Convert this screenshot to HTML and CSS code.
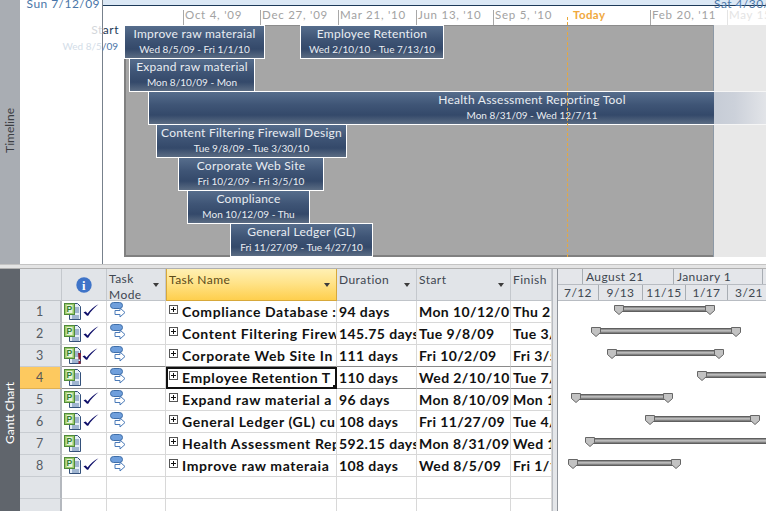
FILE: index.html
```html
<!DOCTYPE html>
<html lang="en">
<head>
<meta charset="utf-8">
<title>Project timeline and Gantt chart</title>
<link rel="stylesheet" href="styles.css">
</head>
<body>
<svg class="defs" width="0" height="0" aria-hidden="true">
  <symbol id="note" viewBox="0 0 17 17">
    <path d="M5.500.5h8l3 3v13h-11z" fill="#e6eef8" stroke="#33507a"/>
    <path d="M11 5h4M11 7h4M11 9h4M8 13h7M8 15h7" stroke="#5a7ca8"/>
    <rect x=".5" y=".5" width="10" height="11" fill="#9ccb6c" stroke="#4f8a3a"/>
    <rect x="2.500" y="2" width="6" height="8" fill="#e8f4d8"/>
    <text x="5.500" y="9" font-family="Liberation Sans" font-size="8.500" font-weight="700" text-anchor="middle" fill="#2f7d32">P</text>
  </symbol>
  <symbol id="check" viewBox="0 0 16 12">
    <path d="M.5 8.200 2.800 7.500 4.500 9.500C7.500 5.500 11 2.500 15.500.3 11.500 3.500 8 7 5.200 11.700L4 11.700z" fill="#10106a"/>
  </symbol>
  <symbol id="mode" viewBox="0 0 16 16">
    <path d="M5 8.500h5V6l5 4.500L10 15v-2.500H5z" fill="#fff" stroke="#4a7ab8"/>
    <rect x=".5" y=".5" width="12" height="6" rx="3" fill="#6f9fdc" stroke="#3f6ea8"/>
  </symbol>
  <symbol id="info" viewBox="0 0 16 16">
    <circle cx="8" cy="8" r="7.700" fill="#3f74c8"/>
    <text x="8" y="12.500" font-family="Liberation Serif" font-size="12.500" font-weight="700" text-anchor="middle" fill="#fff">i</text>
  </symbol>
  <symbol id="expand" viewBox="0 0 9 9">
    <rect x=".5" y=".5" width="8" height="8" fill="#fff" stroke="#555"/>
    <path d="M2 4.500h5M4.500 2v5" stroke="#111"/>
  </symbol>
  <symbol id="cap" viewBox="0 0 10 10">
    <path d="M.5.500h9v5l-4.500 4-4.500-4z" fill="#c2c2c2" stroke="#666"/>
  </symbol>
  <symbol id="warn" viewBox="0 0 3 11">
    <path d="M0 0h3L2.500 6.500H.5zM.5 8h2v3h-2z" fill="#8f1f2f"/>
  </symbol>
</svg>

<main class="app">
  <section class="timeline-pane">
    <div class="rail rail-light"><span class="rail-label">Timeline</span></div>
    <div class="timeline-gutter"></div>
    <div class="timeline-canvas">
      <div class="band"></div>
      <span class="edge-date edge-start">Sun 7/12/09</span>
      <span class="edge-date edge-end">Sat 4/30/</span>
      <span class="start-label"><span class="faded">St</span>art</span>
      <span class="start-date"><span class="faded-more">Wed 8/5</span>/09</span>

      <div class="tick" style="left:80px"><span>Oct 4, '09</span></div>
      <div class="tick" style="left:157px"><span>Dec 27, '09</span></div>
      <div class="tick" style="left:235px"><span>Mar 21, '10</span></div>
      <div class="tick" style="left:313px"><span>Jun 13, '10</span></div>
      <div class="tick" style="left:390px"><span>Sep 5, '10</span></div>
      <div class="tick" style="left:547px"><span>Feb 20, '11</span></div>
      <div class="tick tick-faded" style="left:624px"><span>May 15</span></div>

      <div class="plot"></div>
      <div class="future"></div>

      <div class="tl-bar" style="left:21px;top:25px;width:141px"><b>Improve raw materaial</b><i>Wed 8/5/09 - Fri 1/1/10</i></div>
      <div class="tl-bar" style="left:197px;top:25px;width:144px"><b>Employee Retention</b><i>Wed 2/10/10 - Tue 7/13/10</i></div>
      <div class="tl-bar" style="left:26px;top:58px;width:126px"><b>Expand raw material</b><i>Mon 8/10/09 - Mon</i></div>
      <div class="tl-bar" style="left:45px;top:91px;width:768px"><b>Health Assessment Reporting Tool</b><i>Mon 8/31/09 - Wed 12/7/11</i></div>
      <div class="tl-bar" style="left:53px;top:124px;width:191px"><b>Content Filtering Firewall Design</b><i>Tue 9/8/09 - Tue 3/30/10</i></div>
      <div class="tl-bar" style="left:75px;top:157px;width:146px"><b>Corporate Web Site</b><i>Fri 10/2/09 - Fri 3/5/10</i></div>
      <div class="tl-bar" style="left:84px;top:190px;width:123px"><b>Compliance</b><i>Mon 10/12/09 - Thu</i></div>
      <div class="tl-bar" style="left:127px;top:223px;width:143px"><b>General Ledger (GL)</b><i>Fri 11/27/09 - Tue 4/27/10</i></div>

      <div class="future-bar"></div>
      <span class="today-label">Today</span>
      <div class="today-line"></div>
    </div>
  </section>

  <div class="pane-split"></div>

  <section class="gantt-pane">
    <div class="rail rail-dark"><span class="rail-label">Gantt Chart</span></div>
    <div class="sheet">
      <div class="hd"></div>
      <div class="hd hd-info"><svg class="ico-info"><use href="#info"/></svg></div>
      <div class="hd hd-mode">Task<br>Mode<span class="caret"></span></div>
      <div class="hd hd-active">Task Name<span class="caret"></span></div>
      <div class="hd">Duration<span class="caret"></span></div>
      <div class="hd">Start<span class="caret"></span></div>
      <div class="hd">Finish</div>

      <div class="num">1</div>
      <div class="c icons"><svg class="ico-note"><use href="#note"/></svg><svg class="ico-check"><use href="#check"/></svg></div>
      <div class="c modec"><svg class="ico-mode"><use href="#mode"/></svg></div>
      <div class="c name"><svg class="ico-exp"><use href="#expand"/></svg><span class="clip">Compliance Database :</span></div>
      <div class="c">94 days</div><div class="c">Mon 10/12/09</div><div class="c">Thu 2/</div>

      <div class="num">2</div>
      <div class="c icons"><svg class="ico-note"><use href="#note"/></svg><svg class="ico-check"><use href="#check"/></svg></div>
      <div class="c modec"><svg class="ico-mode"><use href="#mode"/></svg></div>
      <div class="c name"><svg class="ico-exp"><use href="#expand"/></svg><span class="clip">Content Filtering Firewall</span></div>
      <div class="c">145.75 days</div><div class="c">Tue 9/8/09</div><div class="c">Tue 3/</div>

      <div class="num">3</div>
      <div class="c icons dark"><svg class="ico-note"><use href="#note"/></svg><svg class="ico-warn"><use href="#warn"/></svg><svg class="ico-check"><use href="#check"/></svg></div>
      <div class="c modec dark"><svg class="ico-mode"><use href="#mode"/></svg></div>
      <div class="c name dark"><svg class="ico-exp"><use href="#expand"/></svg><span class="clip">Corporate Web Site In</span></div>
      <div class="c dark">111 days</div><div class="c dark">Fri 10/2/09</div><div class="c dark">Fri 3/5</div>

      <div class="num num-active">4</div>
      <div class="c icons dark"><svg class="ico-note"><use href="#note"/></svg></div>
      <div class="c modec dark"><svg class="ico-mode"><use href="#mode"/></svg></div>
      <div class="c name selected"><svg class="ico-exp"><use href="#expand"/></svg><span class="clip">Employee Retention T</span></div>
      <div class="c dark">110 days</div><div class="c dark">Wed 2/10/10</div><div class="c dark">Tue 7/</div>

      <div class="num">5</div>
      <div class="c icons"><svg class="ico-note"><use href="#note"/></svg><svg class="ico-check"><use href="#check"/></svg></div>
      <div class="c modec"><svg class="ico-mode"><use href="#mode"/></svg></div>
      <div class="c name"><svg class="ico-exp"><use href="#expand"/></svg><span class="clip">Expand raw material a</span></div>
      <div class="c">96 days</div><div class="c">Mon 8/10/09</div><div class="c">Mon 1</div>

      <div class="num">6</div>
      <div class="c icons"><svg class="ico-note"><use href="#note"/></svg><svg class="ico-check"><use href="#check"/></svg></div>
      <div class="c modec"><svg class="ico-mode"><use href="#mode"/></svg></div>
      <div class="c name"><svg class="ico-exp"><use href="#expand"/></svg><span class="clip">General Ledger (GL) cu</span></div>
      <div class="c">108 days</div><div class="c">Fri 11/27/09</div><div class="c">Tue 4/</div>

      <div class="num">7</div>
      <div class="c icons"><svg class="ico-note"><use href="#note"/></svg></div>
      <div class="c modec"><svg class="ico-mode"><use href="#mode"/></svg></div>
      <div class="c name"><svg class="ico-exp"><use href="#expand"/></svg><span class="clip">Health Assessment Rep</span></div>
      <div class="c">592.15 days</div><div class="c">Mon 8/31/09</div><div class="c">Wed 1</div>

      <div class="num">8</div>
      <div class="c icons"><svg class="ico-note"><use href="#note"/></svg><svg class="ico-check"><use href="#check"/></svg></div>
      <div class="c modec"><svg class="ico-mode"><use href="#mode"/></svg></div>
      <div class="c name"><svg class="ico-exp"><use href="#expand"/></svg><span class="clip">Improve raw materaia</span></div>
      <div class="c">108 days</div><div class="c">Wed 8/5/09</div><div class="c">Fri 1/1</div>

      <div class="num"></div><div class="c"></div><div class="c"></div><div class="c"></div><div class="c"></div><div class="c"></div><div class="c"></div>
      <div class="num"></div><div class="c"></div><div class="c"></div><div class="c"></div><div class="c"></div><div class="c"></div><div class="c"></div>
    </div>
    <div class="sheet-split"></div>
    <div class="chart">
      <div class="tier tier-top">
        <span class="t" style="width:25px"></span><span class="t t-left" style="width:91px">August 21</span><span class="t t-left" style="width:89px">January 1</span><span class="t" style="width:20px"></span>
      </div>
      <div class="tier tier-bottom">
        <span class="t" style="width:41px">7/12</span><span class="t" style="width:44px">9/13</span><span class="t" style="width:43px">11/15</span><span class="t" style="width:42px">1/17</span><span class="t" style="width:43px">3/21</span>
      </div>
      <div class="chart-body">
        <div class="gbar" style="left:56px;top:4px;width:101px"><svg class="cap"><use href="#cap"/></svg><svg class="cap cap-end"><use href="#cap"/></svg></div>
        <div class="gbar" style="left:33px;top:26px;width:150px"><svg class="cap"><use href="#cap"/></svg><svg class="cap cap-end"><use href="#cap"/></svg></div>
        <div class="gbar" style="left:49px;top:48px;width:117px"><svg class="cap"><use href="#cap"/></svg><svg class="cap cap-end"><use href="#cap"/></svg></div>
        <div class="gbar" style="left:139px;top:70px;width:120px"><svg class="cap"><use href="#cap"/></svg></div>
        <div class="gbar" style="left:13px;top:92px;width:102px"><svg class="cap"><use href="#cap"/></svg><svg class="cap cap-end"><use href="#cap"/></svg></div>
        <div class="gbar" style="left:87px;top:114px;width:115px"><svg class="cap"><use href="#cap"/></svg><svg class="cap cap-end"><use href="#cap"/></svg></div>
        <div class="gbar" style="left:27px;top:136px;width:220px"><svg class="cap"><use href="#cap"/></svg></div>
        <div class="gbar" style="left:10px;top:158px;width:113px"><svg class="cap"><use href="#cap"/></svg><svg class="cap cap-end"><use href="#cap"/></svg></div>
      </div>
    </div>
  </section>
</main>
</body>
</html>
```

FILE: styles.css
```css
* { box-sizing: border-box; }
html, body { margin: 0; height: 100%; background: #fff; overflow: hidden; }
body { font-family: Lato, "Open Sans", sans-serif; color: #222; }
.defs { position: absolute; }

.app { display: flex; flex-direction: column; width: 766px; height: 511px; overflow: hidden; }

.rail { width: 20px; flex: none; display: flex; align-items: center; justify-content: center; }
.rail-light { background: #a9adb3; color: #3d4044; padding: 0 1px 4px 0; }
.rail-dark { background: #60656c; color: #fff; padding: 46px 1px 0 0; }
.rail-label { writing-mode: vertical-rl; transform: rotate(180deg); font-size: 12px; }

/* timeline */
.timeline-pane { display: flex; height: 264px; flex: none; }
.timeline-gutter { width: 83px; flex: none; background: #fff; border-right: 1px solid #77818c; }
.timeline-canvas { position: relative; flex: 1; background: #fff; }
.band { position: absolute; left: 0; right: 0; top: 0; height: 6px; background: #dbe8f5; border-bottom: 1px solid #1d3a58; }

.edge-date { position: absolute; top: -3px; font-size: 12px; line-height: 14px; letter-spacing: .45px; color: #4a76a8; white-space: nowrap; z-index: 3; }
.edge-start { right: 666px; }
.edge-end { left: 611px; }
.start-label { position: absolute; right: 647px; top: 22px; font-size: 12px; line-height: 15px; letter-spacing: .5px; color: #1d3a58; }
.start-label .faded { color: #d4d7db; }
.start-date { position: absolute; right: 648px; top: 39px; font-size: 10px; line-height: 14px; color: #4a76a8; white-space: nowrap; }
.start-date .faded-more { color: #d3dde8; }

.tick { position: absolute; top: 10px; height: 15px; border-left: 1px solid #a8a8a8; }
.tick span { position: absolute; left: 1px; top: -2px; font-size: 11.500px; line-height: 14px; letter-spacing: .75px; color: #a2a2a2; white-space: nowrap; }
.tick-faded { border-color: #e4e4e4; }
.tick-faded span { color: #e4e4e4; }

.plot { position: absolute; left: 21px; top: 25px; width: 590px; height: 232px; background: #a6a6a6; border-top: 1px solid #8c8c8c; border-left: 2px solid #808080; border-bottom: 2px solid #808080; }
.future { position: absolute; left: 610px; top: 25px; right: 0; height: 232px; background: #e8e8e8; border-left: 1px solid #8d99a6; }
.future-bar { position: absolute; left: 611px; right: 0; top: 91px; height: 34px; background: linear-gradient(90deg, #c6ccd6, #ccd1da 40%, #e2e4e8); border-top: 1px solid #f6f6f6; border-bottom: 1px solid #f6f6f6; z-index: 2; }

.tl-bar { position: absolute; height: 34px; border: 1px solid #fff; padding-top: 1px; text-align: center; color: #e9edf2; background: linear-gradient(#566d8c 0%, #3f5576 40%, #34496a 72%, #5b6c83 100%); white-space: nowrap; overflow: hidden; z-index: 1; }
.tl-bar b { display: block; font-weight: 400; font-size: 12px; line-height: 14px; letter-spacing: .25px; }
.tl-bar i { display: block; font-style: normal; font-size: 10px; line-height: 15px; margin-top: 1px; }

.today-label { position: absolute; left: 470px; top: 8px; font-size: 11.500px; line-height: 14px; font-weight: 700; letter-spacing: .4px; color: #f0a83c; }
.today-line { position: absolute; left: 464px; top: 17px; height: 240px; border-left: 1px dashed #e8a83a; z-index: 2; }

.pane-split { height: 5px; flex: none; background: #e4e4e4; border-top: 1px solid #c4c4c4; border-bottom: 1px solid #b0b0b0; }

/* gantt */
.gantt-pane { display: flex; flex: 1; min-height: 0; }
.sheet { width: 532px; flex: none; display: grid; grid-template-columns: 42px 45px 59px 171px 80px 94px 41px; grid-template-rows: 32px repeat(10, 22px); }

.hd { position: relative; background: #e1e4e8; border-right: 1px solid #c4c8cd; border-bottom: 1px solid #c0c4c9; padding: 3px 0 0 2px; font-size: 12px; line-height: 15px; letter-spacing: .45px; color: #3e4650; white-space: nowrap; overflow: hidden; }
.hd-info { display: flex; justify-content: center; padding: 8px 0 0; }
.hd-mode { line-height: 16px; padding-top: 2px; }
.hd-active { background: linear-gradient(#fff0b4, #ffe389 45%, #fecf4d); color: #5a4a1a; border-right-color: #d7a83a; border-left: 1px solid #d7a83a; border-bottom-color: #d7a83a; }
.caret { position: absolute; right: 6px; top: 14px; border: 3.500px solid transparent; border-top: 4px solid #3c3c3c; border-bottom: 0; }
.ico-info { width: 16px; height: 16px; }

.num { background: #e1e4e8; border-right: 2px solid #b4b8be; border-bottom: 1px solid #c8ccd1; font-size: 12.500px; line-height: 21px; text-align: center; color: #555b63; padding-right: 1px; }
.num-active { background: #fdc95f; color: #555; border-bottom-color: #e0b050; }

.c { position: relative; border-right: 1px solid #d8d8d8; border-bottom: 1px solid #d8d8d8; padding: 0 0 0 2px; font-size: 14px; line-height: 21px; font-weight: 700; letter-spacing: .4px; color: #111; white-space: nowrap; overflow: hidden; }
.dark { border-bottom-color: #8a8a8a; }
.icons { display: flex; align-items: flex-start; padding: 2px 0 0 2px; }
.ico-note { width: 17px; height: 17px; flex: none; }
.ico-check { width: 16px; height: 12px; flex: none; margin: 1px 0 0 2px; }
.ico-warn { width: 3px; height: 11px; flex: none; margin: 6px -1px 0 -3px; }
.modec { padding: 1px 0 0 3px; }
.ico-mode { display: block; width: 16px; height: 16px; }
.name { display: flex; padding-left: 3px; overflow: hidden; letter-spacing: .6px; }
.ico-exp { width: 9px; height: 9px; flex: none; margin: 4px 4px 0 0; }
.clip { overflow: hidden; }
.selected { outline: 2px solid #111; outline-offset: -2px; }
.selected::after { content: ""; position: absolute; right: 0; bottom: 0; width: 3px; height: 3px; background: #111; }

.sheet-split { width: 6px; flex: none; background: #e4e6e9; border-left: 1px solid #b8bcc2; border-right: 1px solid #8f949b; }

.chart { position: relative; flex: 1; min-width: 0; overflow: hidden; display: flex; flex-direction: column; }
.tier { display: flex; flex: none; background: #e4e6ea; border-bottom: 1px solid #b8bcc2; font-size: 12px; letter-spacing: .4px; color: #3e4650; }
.tier-top { height: 16px; }
.tier-bottom { height: 16px; }
.t { flex: none; text-align: center; line-height: 15px; border-right: 1px solid #a8adb3; white-space: nowrap; overflow: hidden; }
.t-left { text-align: left; padding-left: 3px; }
.chart-body { position: relative; flex: 1; background: #fff; }

.gbar { position: absolute; height: 10px; }
.gbar::before { content: ""; position: absolute; left: 5px; right: 5px; top: 1px; height: 6px; background: linear-gradient(#5f5f5f 0, #5f5f5f 1px, #c4c4c4 2px, #a0a0a0 4px, #5f5f5f 5px); }
.cap { position: absolute; left: 0; top: 0; width: 10px; height: 10px; }
.cap-end { left: auto; right: 0; }
```
